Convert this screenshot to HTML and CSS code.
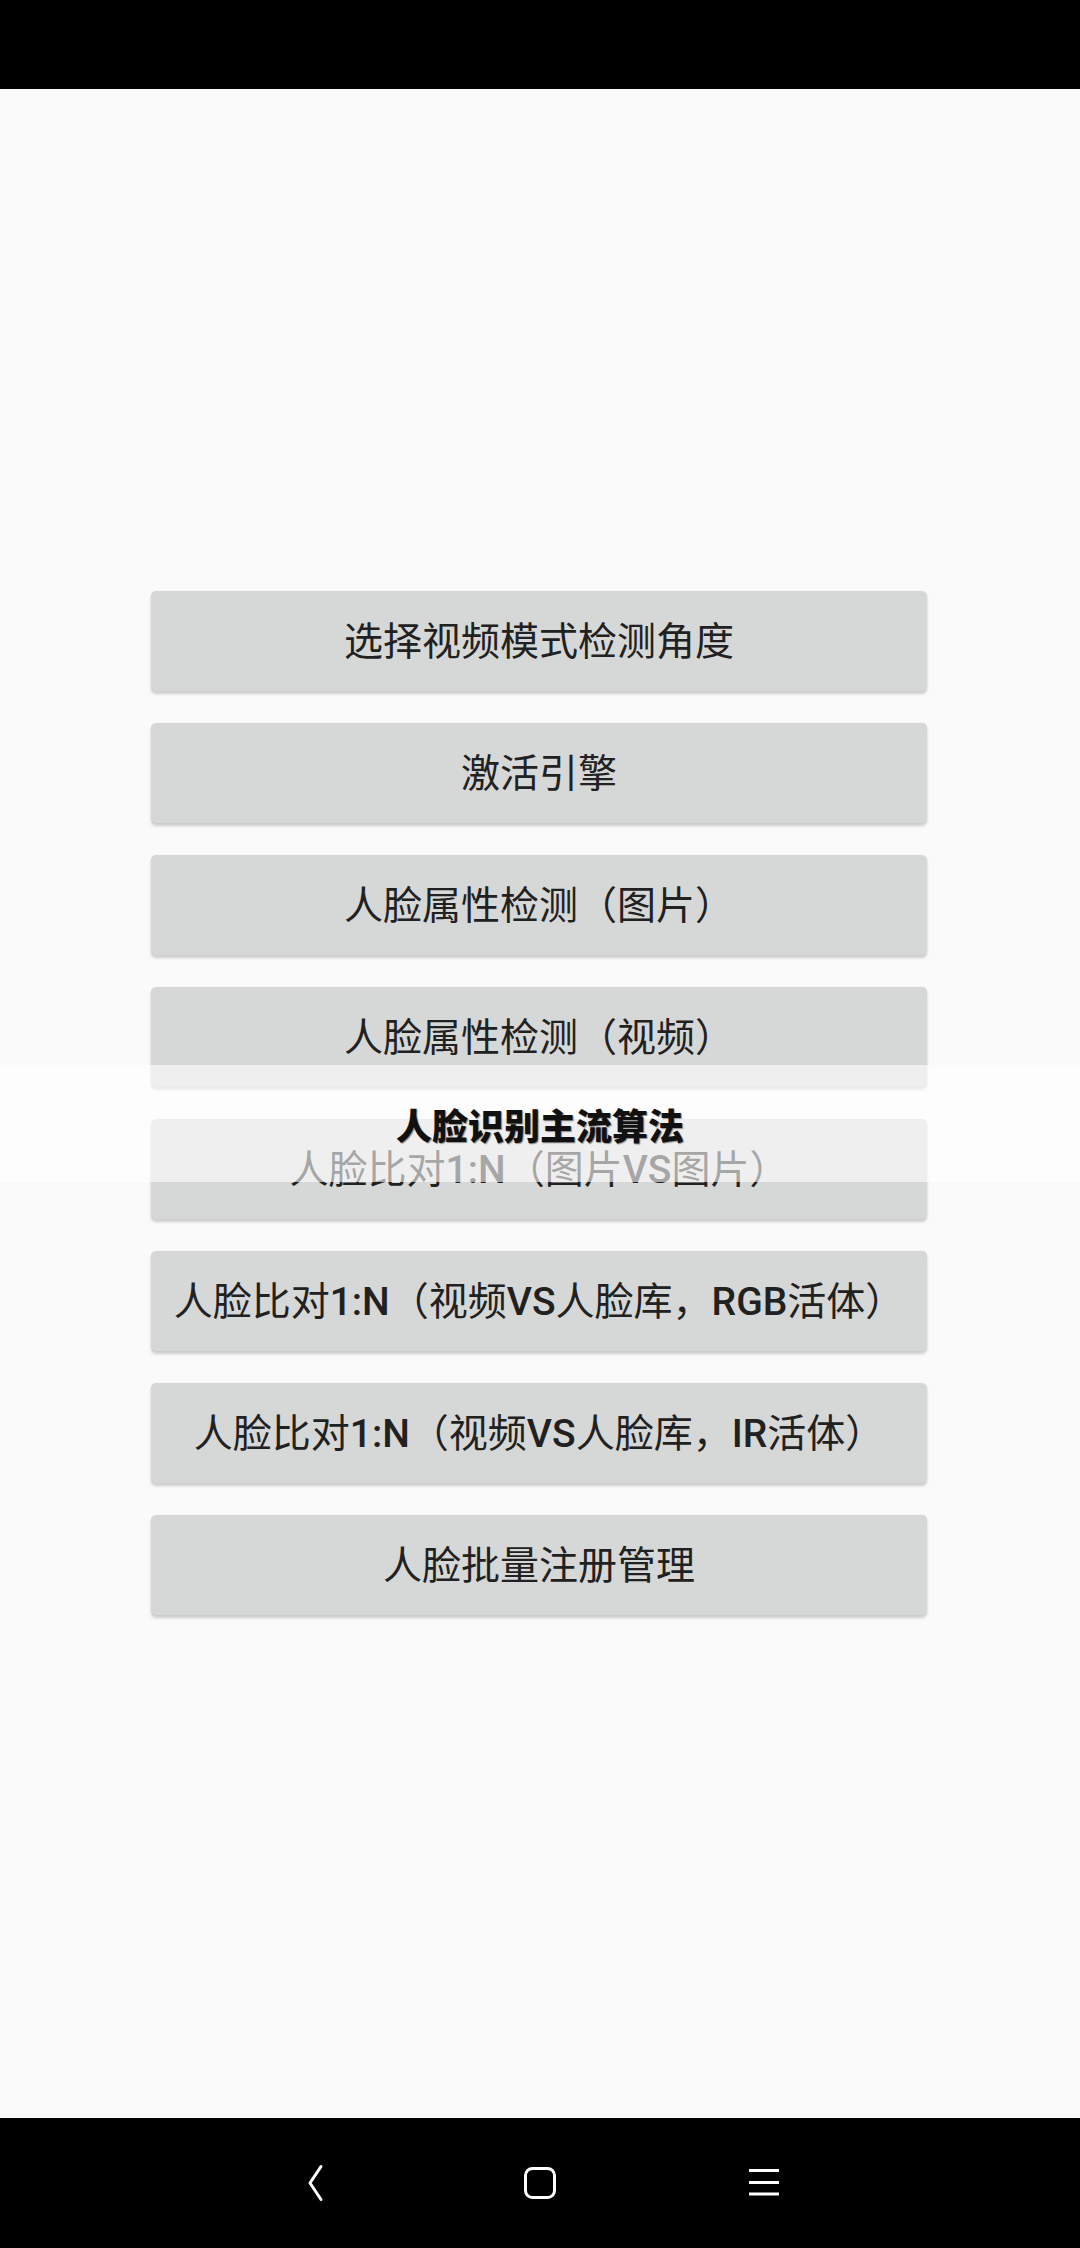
FILE: index.html
```html
<!DOCTYPE html>
<html lang="zh-CN">
<head>
    <meta charset="UTF-8">
    <meta name="viewport" content="width=device-width, initial-scale=1.0">
    <title>人脸识别</title>
    <link rel="stylesheet" href="styles.css">
</head>
<body>
    <div class="status-bar"></div>

    <!-- Main menu -->
    <div class="main">
        <div class="menu">
            <button class="btn">选择视频模式检测角度</button>
            <button class="btn">激活引擎</button>
            <button class="btn">人脸属性检测（图片）</button>
            <button class="btn">人脸属性检测（视频）</button>
            <button class="btn">人脸比对<span class="latin">1:N</span>（图片<span class="latin">VS</span>图片）</button>
            <button class="btn">人脸比对<span class="latin">1:N</span>（视频<span class="latin">VS</span>人脸库，<span class="latin">RGB</span>活体）</button>
            <button class="btn">人脸比对<span class="latin">1:N</span>（视频<span class="latin">VS</span>人脸库，<span class="latin">IR</span>活体）</button>
            <button class="btn">人脸批量注册管理</button>
        </div>
        <div class="toast">人脸识别主流算法</div>
    </div>

    <!-- Navigation bar -->
    <div class="nav-bar">
        <svg class="nav-icon" viewBox="0 0 40 40">
            <path d="M25 3.5 L14 20 L25 36.5" fill="none" stroke="#fff" stroke-width="3" stroke-linecap="round" stroke-linejoin="round"/>
        </svg>
        <svg class="nav-icon" viewBox="0 0 40 40">
            <rect x="5.5" y="5.5" width="29" height="29" rx="7" fill="none" stroke="#fff" stroke-width="3"/>
        </svg>
        <svg class="nav-icon" viewBox="0 0 40 40">
            <path d="M5 7.5 H35 M5 19.5 H35 M5 31 H35" fill="none" stroke="#fff" stroke-width="3"/>
        </svg>
    </div>
</body>
</html>
```

FILE: styles.css
```css
body {
    margin: 0;
    width: 1080px;
    height: 2248px;
    display: flex;
    flex-direction: column;
    font-family: Roboto, "Noto Sans CJK SC", sans-serif;
    background: #fafafa;
    overflow: hidden;
}
.status-bar {
    height: 89px;
    background: #000;
    flex-shrink: 0;
}
.main {
    position: relative;
    flex: 1;
    display: flex;
    align-items: center;
    background: #fafafa;
}
.menu {
    display: flex;
    flex-direction: column;
    gap: 32px;
    margin-left: 151px;
    margin-bottom: 2px;
    width: 776px;
}
.btn {
    height: 100px;
    border: none;
    border-radius: 5px;
    background: #d6d7d7;
    box-shadow: 0 3px 3px rgba(0, 0, 0, 0.18), 0 0 1px rgba(0, 0, 0, 0.08);
    color: #212121;
    font-family: Roboto, "Noto Sans CJK SC", sans-serif;
    font-size: 39px;
    font-weight: 400;
    padding: 0 0 5px 0;
    white-space: nowrap;
}
.latin {
    font-weight: 500;
}
.toast {
    position: absolute;
    left: 0;
    right: 0;
    top: 976px;
    height: 117px;
    background: rgba(255, 255, 255, 0.6);
    display: flex;
    align-items: center;
    justify-content: center;
    font-family: "Noto Sans CJK SC", sans-serif;
    font-size: 36px;
    font-weight: 900;
    color: #111;
    text-shadow: 1px 1px 1px rgba(0, 0, 0, 0.4);
}
.nav-bar {
    height: 130px;
    flex-shrink: 0;
    background: #000;
    display: flex;
    align-items: center;
    justify-content: center;
    gap: 184px;
}
.nav-icon {
    width: 40px;
    height: 40px;
}
```
